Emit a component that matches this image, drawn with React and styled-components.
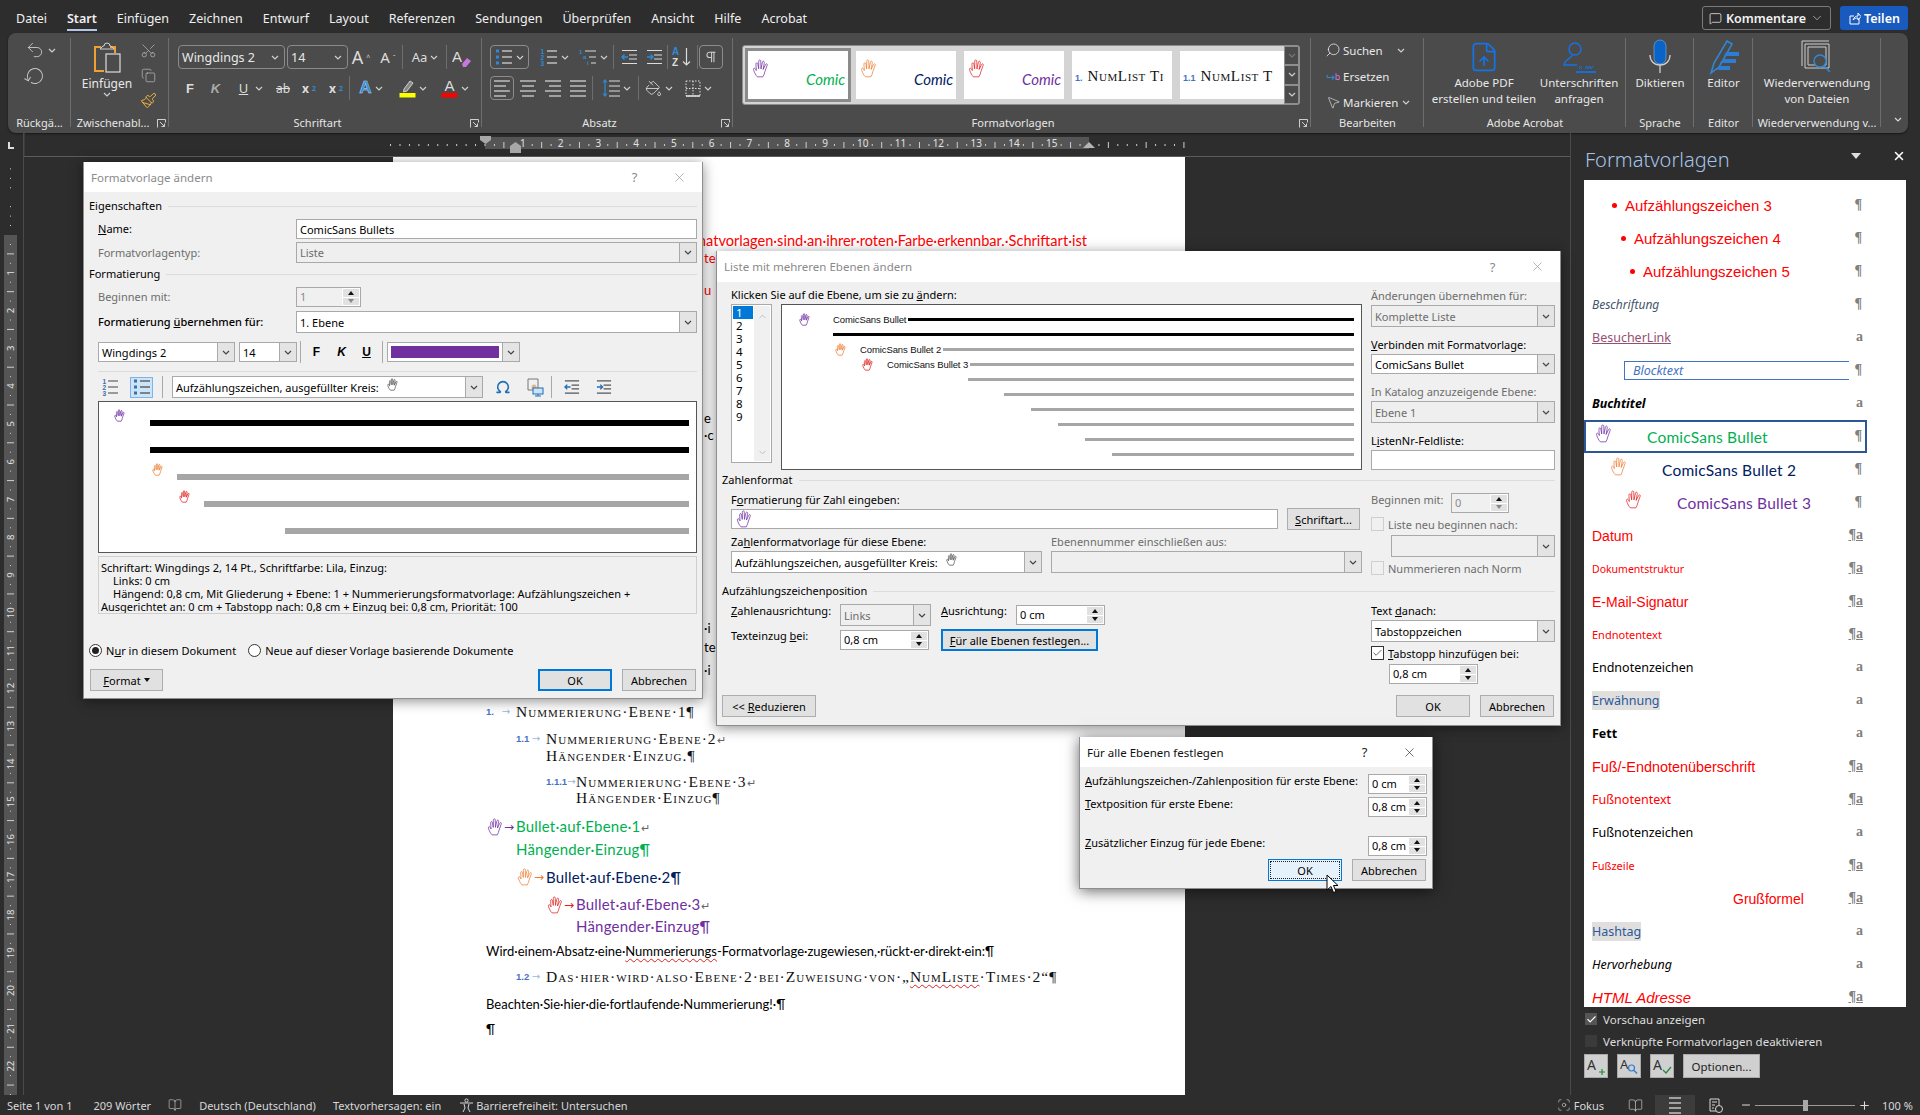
import React from "react";
import styled, { createGlobalStyle } from "styled-components";
import { Scissors, Copy, Paintbrush, Search, MousePointer2, RotateCw, Undo2, MessageSquare, FileUp, BookOpen, Focus, X, PaintBucket, Pilcrow, Omega, Plus, Minus, Check, ChevronDown } from "lucide-react";

const UI = '"Noto Sans", "Open Sans", sans-serif';
const ARIAL = '"Liberation Sans", Arial, sans-serif';
const SERIF = '"Liberation Serif", "Times New Roman", serif';
const BODY = 'Lato, "Noto Sans", sans-serif';

const Global = createGlobalStyle`
  html, body { margin: 0; padding: 0; background: #2d2d2d; }
  * { box-sizing: border-box; }
  body { font-family: ${UI}; }
  u { text-underline-offset: 1px; }
`;

const App_ = styled.div`
  position: relative; width: 1920px; height: 1115px; overflow: hidden;
  display: flex; flex-direction: column; background: #2d2d2d; font-family: ${UI};
`;

/* ---------- top bar ---------- */
const TopBar = styled.div`display: flex; height: 33px; align-items: flex-start; padding: 0 12px 0 16px; flex: none;`;
const Tabs = styled.div`display: flex; gap: 20px; flex: 1;`;
const Tab = styled.div`
  font-size: 12.5px; line-height: 18px; margin-top: 10px; padding-bottom: 1px; color: #f0f0f0;
  font-weight: ${p => (p.$on ? 600 : 400)};
  border-bottom: 2px solid ${p => (p.$on ? "#b4c7e7" : "transparent")};
`;
const Kommentare = styled.div`
  margin-top: 6px; width: 129px; height: 24px; border: 1px solid #7a7a7a; border-radius: 3px; color: #f2f2f2;
  display: flex; align-items: center; padding: 0 6px; gap: 4px; font-size: 12.5px; font-weight: 600; justify-content: space-between;
`;
const KomLabel = styled.div`display: flex; align-items: center; gap: 4px;`;
const Teilen = styled.div`
  margin: 6px 0 0 9px; width: 68px; height: 24px; background: #185abd; border-radius: 3px; color: #fff;
  display: flex; align-items: center; justify-content: center; gap: 3px; font-size: 12.5px; font-weight: 600;
`;

/* ---------- ribbon ---------- */
const Ribbon = styled.div`
  flex: none; height: 100px; margin: 0 12px 0 8px; background: #4b4b4b; border-radius: 8px;
  padding-top: 5px; display: flex; color: #dcdcdc; box-shadow: 0 1px 2px rgba(0,0,0,.5);
`;
const Group = styled.div`
  position: relative; width: ${p => p.$w}px; height: 95px; flex: none; display: flex; flex-direction: column;
  &::after { content: ""; position: absolute; right: 0; top: 0; height: 89px; width: 1px; background: ${p => (p.$nosep ? "transparent" : "#6e6e6e")}; }
`;
const GroupBody = styled.div`
  height: 78px; display: flex; flex-direction: ${p => p.$col ? "column" : "row"};
  padding: ${p => p.$pad || "0"}; gap: ${p => p.$gap || 0}px;
`;
const GroupLabel = styled.div`
  height: 14px; line-height: 14px; font-size: 11px; color: #e6e6e6; text-align: center; white-space: nowrap;
  padding-right: ${p => p.$pr || 0}px;
`;
const Launcher = styled.svg`position: absolute; right: 3px; bottom: 5px; width: 9px; height: 9px;`;
const ToolRow = styled.div`display: flex; height: 24px; align-items: center; margin-top: ${p => p.$mt || 0}px;`;
const Tool = styled.div`
  width: ${p => p.$w}px; height: ${p => p.$h || 24}px; flex: none; display: flex; align-items: center; justify-content: center; gap: 3px;
  color: #dcdcdc; font-size: ${p => p.$fs || 13}px; font-weight: ${p => p.$b ? 700 : 400}; font-style: ${p => p.$i ? "italic" : "normal"};
  margin-left: ${p => p.$ml || 0}px;
  ${p => p.$on ? "border: 1px solid #8c8c8c; border-radius: 4px;" : ""}
  ${p => p.$u ? "text-decoration: underline;" : ""}
  ${p => p.$s ? "text-decoration: line-through;" : ""}
`;
const Sep = styled.div`width: 1px; height: 24px; background: #6e6e6e; flex: none; margin: 0 ${p => p.$m ?? 1}px;`;
const Combo = styled.div`
  width: ${p => p.$w}px; height: 24px; flex: none; border: 1px solid #8a8a8a; border-radius: 4px; display: flex; align-items: center;
  justify-content: space-between; padding: 0 5px 0 3px; font-size: 12.5px; color: #e8e8e8; margin-right: ${p => p.$mr || 0}px;
`;
const PasteCol = styled.div`width: 65px; padding-left: 7px; display: flex; flex-direction: column; align-items: center;`;
const PasteIcon = styled.svg`width: 30px; height: 32px; margin-top: 3px;`;
const PasteText = styled.div`font-size: 12px; line-height: 16px; margin-top: 3px; color: #e8e8e8;`;
const SmallCol = styled.div`width: 24px; display: flex; flex-direction: column; align-items: center; padding-top: 2px; gap: 4px;`;
const SmallIcon = styled.div`height: 21px; display: flex; align-items: center; justify-content: center;`;

const Gallery = styled.div`margin: 7px 0 0 9px; width: 558px; height: 60px; display: flex; border: 1px solid #8e8e8e; border-radius: 3px; background: #d4d4d4;`;
const GalleryItems = styled.div`width: 542px; display: flex; gap: 8px; padding: 5px 0 0 5px; overflow: hidden;`;
const GalleryItem = styled.div`
  width: ${p => p.$w || 100}px; height: 48px; flex: none; background: #fff; display: flex; align-items: center; justify-content: space-between;
  padding: 0 3px; position: relative; white-space: nowrap;
  ${p => p.$sel ? "outline: 3px solid #8b8b8b;" : ""}
`;
const ComicWord = styled.span`font-family: ${BODY}; font-style: italic; font-size: 15px; color: ${p => p.$c}; padding-top: 8px;`;
const HandTop = styled.span`align-self: flex-start; padding-top: 8px; display: flex;`;
const NumWord = styled.span`font-family: ${SERIF}; font-variant: small-caps; font-size: 15px; color: #111; letter-spacing: .6px;`;
const NumLead = styled.span`font-size: 9px; font-weight: 700; color: #4472c4; margin-right: 5px; font-family: ${ARIAL};`;
const GalleryScroll = styled.div`width: 15px; display: flex; flex-direction: column; background: #4b4b4b;`;
const GScrollBtn = styled.div`height: 20px; border: 1px solid #8e8e8e; display: flex; align-items: center; justify-content: center;`;

const EditRow = styled.div`height: 26px; display: flex; align-items: center; font-size: 11.5px; margin-top: ${p => p.$mt || 0}px; color: #e8e8e8;`;
const EditIcon = styled.div`width: 20px; margin-right: 0; display: flex; justify-content: center; align-items: center; font-size: 9px; line-height: 9px;`;
const EditChev = styled.span`margin-left: ${p => p.$ml || 4}px; display: flex;`;
const Large = styled.div`width: ${p => p.$w}px; flex: none; display: flex; flex-direction: column; align-items: center;`;
const LargeIcon = styled.div`height: 37px; display: flex; align-items: center; justify-content: center;`;
const LargeText = styled.div`font-size: 11.5px; line-height: 16px; text-align: center; white-space: nowrap; color: #e8e8e8;`;
const RibbonEnd = styled.div`flex: 1; display: flex; justify-content: center; padding: 79px 0 0 6px;`;

/* ---------- workspace ---------- */
const Workspace = styled.div`flex: 1; display: flex; min-height: 0;`;
const VRuler = styled.svg`width: 24px; height: 962px; flex: none; border-right: 1px solid #4a4a4a;`;
const DocArea = styled.div`width: 1546px; flex: none; display: flex; flex-direction: column;`;
const HRuler = styled.svg`width: 1546px; height: 24px; flex: none; border-bottom: 1px solid #5c5c5c;`;
const Page = styled.div`
  margin-left: 369px; width: 792px; flex: 1; background: #fff; padding: 76px 0 0 93px; color: #000; overflow: hidden;
`;
const DocFrag = styled.div`
  font-family: ${BODY}; font-size: 13px; line-height: 16px; height: 16px; margin-top: ${p => p.$mt || 0}px; white-space: nowrap;
  margin-left: ${p => p.$ml || 0}px; color: ${p => p.$c || "#000"};
`;
const DocRed = styled.div`
  font-family: ${BODY}; font-size: 14.6px; line-height: 16px; height: 16px; color: #f00; white-space: nowrap;
  margin-left: -93px; width: 694px; text-align: right;
`;
const ListLine = styled.div`
  height: ${p => p.$h || 16}px; line-height: ${p => p.$h || 16}px; margin-top: ${p => p.$mt || 0}px; margin-left: ${p => p.$ml || 0}px;
  white-space: nowrap; display: flex; align-items: center;
`;
const NumMark = styled.span`width: 30px; flex: none; font-family: ${ARIAL}; font-size: 9.5px; font-weight: 700; color: #4472c4; white-space: pre;`;
const NumArrow = styled.span`color: #9ab6e0; font-size: 10px; font-family: "DejaVu Sans", sans-serif; font-weight: 400;`;
const Caps = styled.span`font-family: ${SERIF}; font-variant: small-caps; font-size: 15.5px; letter-spacing: 1px; color: #111;`;
const Comic = styled.span`font-family: ${BODY}; font-size: 15px; color: ${p => p.$c}; letter-spacing: .2px;`;
const HandSlot = styled.span`width: 30px; flex: none; display: flex; align-items: center; color: ${p => p.$c}; font-size: 12px; font-family: "DejaVu Sans", sans-serif;`;
const Wavy = styled.span`text-decoration: underline wavy #e02020 1px; text-underline-offset: 2px;`;
const Soft = styled.span`color: #666; font-size: 11px;`;

/* ---------- styles pane ---------- */
const Pane = styled.div`width: 350px; flex: none; border-left: 1px solid #4a4a4a; padding-left: 13px; display: flex; flex-direction: column;`;
const PaneHead = styled.div`height: 47px; display: flex; align-items: center; padding: 6px 10px 0 1px; color: #eee;`;
const PaneTitle = styled.div`flex: 1; font-size: 20px; font-weight: 300; color: #a6c3e8;`;
const PaneTri = styled.div`width: 0; height: 0; border: 5px solid transparent; border-top: 6px solid #ddd; border-bottom: 0; margin-right: 31px; margin-top: -8px;`;
const PaneClose = styled.div`margin-top: -8px; margin-right: 4px; display: flex; color: #fff;`;
const StyleList = styled.div`width: 322px; height: 827px; background: #fff; padding-top: 9px; overflow: hidden; flex: none;`;
const StyleRow = styled.div`
  width: 283px; height: 33px; display: flex; align-items: center; position: relative; padding-left: ${p => p.$pl}px; flex: none; white-space: nowrap;
  ${p => p.$sel ? "outline: 2px solid #2b5797; outline-offset: -2px;" : ""}
`;
const StyleName = styled.span`
  font-family: ${p => p.$f === "a" ? ARIAL : p.$f === "c" ? BODY : UI}; font-size: ${p => p.$s}px; color: ${p => p.$c};
  font-style: ${p => p.$i ? "italic" : "normal"}; font-weight: ${p => p.$b ? 700 : 400};
  text-decoration: ${p => p.$u ? "underline" : "none"}; background: ${p => p.$bg || "transparent"};
  letter-spacing: ${p => p.$ls || 0}px; padding: ${p => p.$bg ? "1px 0" : 0};
`;
const Dot = styled.span`width: 5px; height: 5px; border-radius: 50%; background: #f00; margin-right: 8px; flex: none;`;
const BlockBox = styled.div`
  width: 225px; height: 19px; border: 1px solid #4472c4; border-right: 0; margin-left: 32px; padding-left: 8px; display: flex; align-items: center;
`;
const HandGap = styled.span`width: ${p => p.$w}px; flex: none; display: flex; align-items: center;`;
const Marker = styled.span`
  position: absolute; right: ${p => p.$r}px; top: 8px; font-family: ${SERIF}; font-size: 14px; font-weight: 700; color: #808080; line-height: 15px;
  text-decoration: ${p => p.$u ? "underline" : "none"};
`;
const PaneCheck = styled.div`height: 22px; display: flex; align-items: center; gap: 6px; font-size: 11.5px; color: #dedede; padding-left: 1px; position: relative; top: 1px;`;
const PaneBox = styled.div`width: 12px; height: 12px; background: ${p => p.$on ? "#555" : "#3a3a3a"}; display: flex; align-items: center; justify-content: center; color: #fff;`;
const PaneBtns = styled.div`display: flex; gap: 9px; margin-top: 3px;`;
const PaneBtn = styled.div`width: ${p => p.$w || 24}px; height: 24px; background: #d0d0d0; border: 1px solid #aaa; display: flex; align-items: center; justify-content: center; font-size: 11.5px; color: #222;`;

/* ---------- status bar ---------- */
const Status = styled.div`flex: none; height: 20px; display: flex; align-items: center; font-size: 11px; color: #d8d8d8; padding-left: 7px; white-space: nowrap;`;
const StatusItem = styled.div`margin-left: ${p => p.$ml || 0}px; display: flex; align-items: center; gap: ${p => p.$gap ?? 3}px; width: ${p => p.$w ? p.$w + "px" : "auto"};`;
const StatusRight = styled.div`margin-left: auto; display: flex; align-items: center; height: 20px;`;
const ViewBtn = styled.div`width: 40px; height: 20px; display: flex; align-items: center; justify-content: center; background: ${p => p.$on ? "#3c3c3c" : "transparent"}; margin-left: ${p => p.$ml || 0}px;`;
const ZoomMinus = styled.span`display: flex; margin-left: 5px;`;
const Slider = styled.div`width: 100px; height: 1px; background: #9a9a9a; margin: 0 3px; position: relative;`;
const Thumb = styled.div`position: absolute; left: 48px; top: -5px; width: 5px; height: 11px; background: #a8a8a8;`;

/* ---------- dialog chrome ---------- */
const Dialog = styled.div`
  position: absolute; left: ${p => p.$x}px; top: ${p => p.$y}px; width: ${p => p.$w}px; height: ${p => p.$h}px;
  background: #f0f0f0; box-shadow: 0 2px ${p => p.$strong ? "14px rgba(0,0,0,.6)" : "12px rgba(0,0,0,.45)"}; border: 1px solid #8e8e8e; border-top-width: 0;
  font-family: ${UI}; font-size: 11px; color: #000; display: flex; flex-direction: column;
`;
const TitleBar = styled.div`height: ${p => p.$h || 30}px; flex: none; background: #fff; display: flex; align-items: center; padding-left: ${p => p.$pl || 7}px;`;
const TitleText = styled.div`flex: 1; font-size: 11.5px; color: ${p => p.$on ? "#111" : "#8a8a8a"};`;
const TitleHelp = styled.div`width: 45px; text-align: center; font-size: 13px; color: ${p => p.$on ? "#222" : "#8a8a8a"};`;
const TitleClose = styled.div`width: 45px; display: flex; justify-content: center; color: ${p => p.$on ? "#222" : "#8a8a8a"};`;
const Body = styled.div`flex: 1; padding: 0 5px; display: flex; flex-direction: column;`;
const SectionHead = styled.div`
  height: 16px; display: flex; align-items: center; gap: 6px; margin-top: ${p => p.$mt || 0}px; line-height: 16px; white-space: nowrap;
  &::after { content: ""; flex: 1; height: 1px; background: #dcdcdc; }
`;
const FormRow = styled.div`
  height: ${p => p.$h}px; margin-top: ${p => p.$mt || 0}px; padding-left: ${p => p.$pl ?? 9}px; display: flex; flex: none;
  align-items: ${p => p.$top ? "flex-start" : "center"}; justify-content: ${p => p.$between ? "space-between" : "flex-start"};
  gap: ${p => p.$gap || 0}px;
`;
const Label = styled.div`
  width: ${p => p.$w ? p.$w + "px" : "auto"}; flex: none; height: 14px; line-height: 14px; white-space: nowrap; color: ${p => p.$dis ? "#6d6d6d" : "#000"};
  margin-top: ${p => p.$mt || 0}px; margin-left: ${p => p.$ml || 0}px; font-weight: ${p => p.$b ? 500 : 400};
  align-self: ${p => p.$top ? "flex-start" : "auto"};
`;
const TextField = styled.div`
  width: ${p => p.$w}px; height: ${p => p.$h || 20}px; flex: none; background: #fff; border: 1px solid #a9a9a9; padding: 0 3px; margin-top: ${p => p.$mt || 0}px;
  display: flex; align-items: center; white-space: nowrap;
`;
const SelectBox = styled.div`
  width: ${p => p.$w}px; height: ${p => p.$h || 22}px; flex: none; display: flex; border: 1px solid #a9a9a9;
  background: ${p => p.$dis ? "#efefef" : "#fff"}; color: ${p => p.$dis ? "#6d6d6d" : "#000"};
  margin-top: ${p => p.$mt || 0}px; margin-left: ${p => p.$ml || 0}px;
`;
const SelectText = styled.div`flex: 1; min-width: 0; padding-left: 3px; display: flex; align-items: center; gap: 7px; white-space: nowrap; overflow: hidden;`;
const SelectArrow = styled.div`width: 17px; flex: none; background: #e4e4e4; border-left: 1px solid #a9a9a9; display: flex; align-items: center; justify-content: center; color: #444;`;
const SpinBox = styled.div`
  width: ${p => p.$w}px; height: 20px; flex: none; display: flex; border: 1px solid #a9a9a9; background: #fff;
  margin-top: ${p => p.$mt || 0}px; margin-left: ${p => p.$ml || 0}px;
`;
const SpinValue = styled.div`flex: 1; padding-left: 3px; line-height: 18px; white-space: nowrap; color: ${p => p.$dis ? "#8a8a8a" : "#000"}; background: ${p => p.$dis ? "#f0f0f0" : "#fff"};`;
const SpinBtns = styled.div`width: 16px; flex: none; display: flex; flex-direction: column; margin: 1px; gap: 1px;`;
const SpinBtn = styled.div`flex: 1; background: #e1e1e1; display: flex; align-items: center; justify-content: center;`;
const Tri = styled.div`
  width: 0; height: 0; border-left: 3.5px solid transparent; border-right: 3.5px solid transparent;
  ${p => p.$down ? `border-top: 4px solid ${p.$dis ? "#888" : "#111"};` : `border-bottom: 4px solid ${p.$dis ? "#888" : "#111"};`}
`;
const Btn = styled.div`
  width: ${p => p.$w}px; height: 22px; flex: none; display: flex; align-items: center; justify-content: center; white-space: nowrap; position: relative; gap: 3px;
  margin-left: ${p => p.$ml || 0}px;
  background: ${p => p.$focus ? "#e5f1fb" : "#e1e1e1"};
  border: ${p => p.$def ? "2px solid #0078d7" : p.$focus ? "1px solid #0078d7" : "1px solid #adadad"};
  ${p => p.$focus ? "outline: 1px dotted #222; outline-offset: -3px;" : ""}
`;
const DlgHr = styled.div`height: 1px; background: #dcdcdc; margin-top: ${p => p.$mt || 0}px; margin-left: ${p => p.$ml || 0}px; flex: none;`;

/* dialog 1 */
const RoundBtn = styled.div`width: 25px; text-align: center; font-family: ${ARIAL}; font-size: 12px; font-weight: 700; font-style: ${p => p.$i ? "italic" : "normal"}; text-decoration: ${p => p.$u ? "underline" : "none"};`;
const DlgSep = styled.div`width: 1px; height: 22px; background: #a9a9a9; flex: none; margin: 0 ${p => p.$m || 3}px;`;
const Swatch = styled.div`flex: 1; margin: 3px; background: ${p => p.$c};`;
const IconToggle = styled.div`
  width: ${p => p.$w || 24}px; height: 21px; flex: none; display: flex; align-items: center; justify-content: center;
  ${p => p.$on ? "background: #cce4f7; border: 1px solid #7eb4ea;" : ""}
  margin-left: ${p => p.$ml || 0}px;
`;
const Preview = styled.div`
  height: ${p => p.$h}px; margin: ${p => p.$mt || 0}px 0 0 ${p => p.$ml ?? 9}px; width: ${p => p.$w}px; flex: none; background: #fff; border: 1px solid #555;
  padding: ${p => p.$pad || "0"}; overflow: hidden;
`;
const PreviewHand = styled.div`height: 11px; padding-left: ${p => p.$pl}px; margin-top: ${p => p.$mt || 0}px; display: flex; align-items: flex-start;`;
const PreviewBar = styled.div`height: ${p => p.$h || 6}px; background: ${p => p.$c || "#a6a6a6"}; margin: ${p => p.$mt || 0}px 7px 0 ${p => p.$ml}px;`;
const Desc = styled.div`
  height: 58px; margin: 3px 0 0 9px; border: 1px solid #e8e8e8; outline: 1px solid #cfcfcf; outline-offset: -1px; font-size: 11px; line-height: 13px; padding: 4px 2px; white-space: nowrap; flex: none;
`;
const DescLine = styled.div`padding-left: ${p => p.$pl || 0}px;`;
const RadioRow = styled.div`height: 16px; margin-top: 28px; display: flex; align-items: center; flex: none;`;
const Radio = styled.div`
  width: 13px; height: 13px; border-radius: 50%; border: 1px solid #333; background: #fff; flex: none; display: flex; align-items: center; justify-content: center;
  margin-left: ${p => p.$ml || 0}px; margin-right: 4px;
  &::after { content: ""; width: 7px; height: 7px; border-radius: 50%; background: ${p => p.$on ? "#222" : "transparent"}; }
`;
const RadioText = styled.span`white-space: nowrap;`;
const FooterRow = styled.div`display: flex; justify-content: ${p => p.$end ? "flex-end" : "space-between"}; margin-top: ${p => p.$mt || 0}px; padding-right: ${p => p.$pr || 0}px; padding-left: ${p => p.$pl || 0}px; flex: none;`;
const BtnPair = styled.div`display: flex; gap: 10px;`;

/* dialog 2 */
const Split = styled.div`display: flex; height: ${p => p.$h}px; flex: none; margin-top: ${p => p.$mt || 0}px;`;
const LeftCol = styled.div`width: 649px; flex: none; padding-left: 9px;`;
const RightCol = styled.div`width: 184px; flex: none;`;
const PreRow = styled.div`display: flex; gap: 9px; margin-top: 2px;`;
const LevelList = styled.div`width: 41px; height: 159px; border: 1px solid #a9a9a9; background: #fff; display: flex; padding: 1px;`;
const LevelItems = styled.div`width: 20px; flex: none;`;
const LevelItem = styled.div`height: 13px; line-height: 13px; font-size: 11.5px; padding-left: 3px; background: ${p => p.$on ? "#0078d7" : "transparent"}; color: ${p => p.$on ? "#fff" : "#000"};`;
const LevelScroll = styled.div`flex: 1; margin-left: 1px; background: #f0f0f0; display: flex; flex-direction: column; justify-content: space-between; align-items: center; padding: 5px 0 3px; color: #bbb;`;
const PRow = styled.div`height: 15px; display: flex; align-items: center; padding-left: ${p => p.$pl}px; padding-right: 7px;`;
const PLabel = styled.span`font-family: ${ARIAL}; font-size: 9.5px; white-space: nowrap; margin-right: 2px; color: #111; letter-spacing: -.1px;`;
const PBar = styled.div`flex: 1; height: 3px; background: ${p => p.$c || "#a6a6a6"};`;
const PHand = styled.span`width: ${p => p.$w}px; flex: none; display: flex;`;
const TwoSel = styled.div`display: flex; gap: 9px; margin-top: 2px;`;
const LabelPair = styled.div`display: flex; margin-top: 5px;`;
const CheckRow = styled.div`display: flex; align-items: center; gap: 4px; height: 14px; margin-top: ${p => p.$mt || 0}px; white-space: nowrap; color: ${p => p.$dis ? "#6d6d6d" : "#000"};`;
const CheckBox = styled.div`width: 13px; height: 14px; flex: none; background: ${p => p.$dis ? "#f0f0f0" : "#fff"}; border: 1px solid ${p => p.$dis ? "#cfcfcf" : "#333"}; display: flex; align-items: center; justify-content: center;`;

/* cursor */
const CursorSvg = styled.svg`position: absolute; left: 1326px; top: 874px; width: 13px; height: 20px;`;

/* ---------- small drawings ---------- */
const Hand = ({ size = 14, color, style }) => {
  const px = Math.round(size * 1.25);
  return (
    <svg width={px} height={px} viewBox="0 0 24 24" fill="none" stroke={color} strokeWidth={(24 / px) * 0.75} strokeLinejoin="round" style={{ flex: "none", ...style }}>
      <path d="M8 22.500c-2-2-3.200-4.500-4.500-8-.6-1.600-.3-2.700.6-2.900.9-.2 1.700.9 2.600 3L6.300 8c-.2-2 .1-3.100 1-3.200 1-.1 1.400 1 1.600 3l.8 4.700.1-9c0-1.500.4-2.400 1.300-2.400s1.300.9 1.300 2.400l.2 9 1.700-7.800c.3-1.400.8-2.100 1.600-1.900.8.2 1.100 1.200.8 2.600l-1.400 7.900 2.800-5.800c.6-1.200 1.200-1.700 1.900-1.300.7.400.7 1.400.1 2.600L17.500 16c-.6 2.400-1.200 4.600-2.500 6.500z" />
    </svg>
  );
};
const Chev = ({ c = "#cfcfcf", w = 8 }) => (
  <svg width={w} height="5" viewBox="0 0 8 5" fill="none"><path d="M1 1l3 3 3-3" stroke={c} strokeWidth="1.2" /></svg>
);
const Lines = ({ w = 18, n = 3, lead = 0, c = "#dcdcdc", align = "left" }) => {
  const ys = n === 4 ? [3, 8, 13, 18] : [4, 10, 16];
  return (
    <svg width={w} height="20" viewBox={`0 0 ${w} 20`}>
      {ys.map((y, i) => {
        const short = align !== "just" && i % 2 === 1 ? 4 : 0;
        const x1 = align === "right" ? lead + short : align === "center" ? lead + short / 2 : lead;
        const x2 = align === "right" ? w : align === "center" ? w - short / 2 : w - short;
        return <line key={y} x1={x1} x2={x2} y1={y} y2={y} stroke={c} strokeWidth="1.2" />;
      })}
    </svg>
  );
};
const BulletIcon = ({ c = "#dcdcdc", b = "#2e8ad8" }) => (
  <svg width="18" height="18" viewBox="0 0 18 18">
    {[3, 9, 15].map(y => <g key={y}><rect x="1" y={y - 1.5} width="3" height="3" fill={b} /><line x1="7" x2="17" y1={y} y2={y} stroke={c} strokeWidth="1.2" /></g>)}
  </svg>
);
const NumIcon = ({ c = "#dcdcdc", b = "#2e8ad8" }) => (
  <svg width="18" height="18" viewBox="0 0 18 18">
    {[3, 9, 15].map((y, i) => <g key={y}><text x="0.5" y={y + 2.5} fontSize="6.5" fontWeight="700" fill={b} fontFamily="Liberation Sans">{i + 1}</text><line x1="7" x2="17" y1={y} y2={y} stroke={c} strokeWidth="1.2" /></g>)}
  </svg>
);
const MultiIcon = () => (
  <svg width="18" height="18" viewBox="0 0 18 18">
    <text x="0" y="6" fontSize="6" fill="#2e8ad8" fontWeight="700" fontFamily="Liberation Sans">1</text>
    <text x="4" y="11" fontSize="6" fill="#2e8ad8" fontWeight="700" fontFamily="Liberation Sans">a</text>
    <text x="8" y="17" fontSize="6" fill="#2e8ad8" fontWeight="700" fontFamily="Liberation Sans">i</text>
    <path d="M6 3h11M10 9h7M12 15h5" stroke="#dcdcdc" strokeWidth="1.2" />
  </svg>
);
const IndentIcon = ({ out, c = "#dcdcdc", b = "#2e8ad8" }) => (
  <svg width="17" height="16" viewBox="0 0 17 16" fill="none">
    <path d="M1 1.5h15M8 6h8M8 10h8M1 14.5h15" stroke={c} strokeWidth="1.2" />
    <path d={out ? "M7 8H1M3.5 5.5L1 8l2.5 2.5" : "M1 8h6M4.5 5.5L7 8l-2.5 2.5"} stroke={b} strokeWidth="1.4" />
  </svg>
);
const SortIcon = () => (
  <svg width="20" height="22" viewBox="0 0 20 22">
    <text x="0" y="9" fontSize="10" fontWeight="700" fill="#2e8ad8" fontFamily="Liberation Sans">A</text>
    <text x="0" y="20" fontSize="10" fontWeight="700" fill="#dcdcdc" fontFamily="Liberation Sans">Z</text>
    <path d="M14.5 2v17M11 15.5l3.5 3.5 3.5-3.5" stroke="#dcdcdc" strokeWidth="1.2" fill="none" />
  </svg>
);
const LineSpacing = () => (
  <svg width="18" height="20" viewBox="0 0 18 20" fill="none">
    <path d="M7 3h11M7 8h11M7 13h11M7 18h11" stroke="#dcdcdc" strokeWidth="1.2" />
    <path d="M3 2v16M1 4.5L3 2l2 2.5M1 15.5L3 18l2-2.5" stroke="#2e8ad8" strokeWidth="1.2" />
  </svg>
);
const BorderIcon = () => (
  <svg width="16" height="17" viewBox="0 0 16 17" fill="none">
    <path d="M1 1h14v15H1zM8 1v15M1 8.5h14" stroke="#dcdcdc" strokeWidth="1" strokeDasharray="1.5 1.5" />
    <path d="M1 16h14" stroke="#eee" strokeWidth="1.4" />
  </svg>
);
const LetterBar = ({ c, children, letter = "#dcdcdc" }) => (
  <svg width="17" height="20" viewBox="0 0 17 20">
    <text x="8.5" y="13" textAnchor="middle" fontSize="15" fill={letter} fontFamily="Liberation Sans">{children}</text>
    <rect x="0.5" y="15" width="16" height="4.5" fill={c} />
  </svg>
);
const HighlightIcon = () => (
  <svg width="17" height="20" viewBox="0 0 17 20" fill="none">
    <path d="M5 11l6-8 3 2-6 8-3.5 1z" stroke="#cfcfcf" strokeWidth="1" fill="#8a8a8a" />
    <rect x="0.5" y="15" width="16" height="4.5" fill="#ffff00" />
  </svg>
);
const Launch = () => (
  <Launcher viewBox="0 0 9 9" fill="none"><path d="M.5 8.5V.5h3M.5.5h8v3M3 3l4.5 4.5M7.5 4.5v3h-3" stroke="#cfcfcf" strokeWidth="1" /></Launcher>
);
const NumberListIcon = () => (
  <svg width="16" height="18" viewBox="0 0 16 18">
    {[3, 9, 15].map((y, i) => <g key={y}><text x="0.5" y={y + 2.5} fontSize="6.5" fontWeight="700" fill="#3d6ea5" fontFamily="Liberation Sans">{i + 1}</text><line x1="6" x2="16" y1={y} y2={y} stroke="#444" strokeWidth="1" /></g>)}
  </svg>
);
const SymbolChev = () => <Chev c="#444" />;

const Select = ({ w, h, dis, mt, ml, children }) => (
  <SelectBox $w={w} $h={h} $dis={dis} $mt={mt} $ml={ml}>
    <SelectText>{children}</SelectText>
    <SelectArrow><SymbolChev /></SelectArrow>
  </SelectBox>
);
const Spin = ({ w, v, dis, mt, ml }) => (
  <SpinBox $w={w} $mt={mt} $ml={ml}>
    <SpinValue $dis={dis}>{v}</SpinValue>
    <SpinBtns>
      <SpinBtn><Tri /></SpinBtn>
      <SpinBtn><Tri $down $dis={dis} /></SpinBtn>
    </SpinBtns>
  </SpinBox>
);
const Title = ({ on, children, h, pl }) => (
  <TitleBar $h={h} $pl={pl}>
    <TitleText $on={on}>{children}</TitleText>
    <TitleHelp $on={on}>?</TitleHelp>
    <TitleClose $on={on}><X size={15} strokeWidth={1} /></TitleClose>
  </TitleBar>
);
const Check_ = ({ on, dis, mt, children }) => (
  <CheckRow $dis={dis} $mt={mt}>
    <CheckBox $dis={dis}>{on && <Check size={12} strokeWidth={1.4} color="#111" />}</CheckBox>
    <span>{children}</span>
  </CheckRow>
);

/* ---------- data ---------- */
const TABS = ["Datei", "Start", "Einfügen", "Zeichnen", "Entwurf", "Layout", "Referenzen", "Sendungen", "Überprüfen", "Ansicht", "Hilfe", "Acrobat"];

const rulerNums = Array.from({ length: 15 }, (_, i) => i + 1);
const HRulerDraw = () => {
  const z = 461, cm = 37.78; // x of ruler zero in this svg
  const ticks = [];
  for (let i = -10; i <= 80; i++) {
    const x = z + i * cm / 4;
    if (x < 366 || x > 1162) continue;
    if (i % 4 === 0 && i > 0 && i < 64) continue;
    ticks.push(<line key={i} x1={x} x2={x} y1={i % 4 === 2 ? 9 : 11} y2={i % 4 === 2 ? 15 : 13} stroke="#cfcfcf" strokeWidth="1" />);
  }
  return (
    <HRuler viewBox="0 0 1546 23">
      <path d="M0.5 0v24" stroke="#3a3a3a" />
      <rect x={z} y="4" width={1065 - z} height="12" fill="#555" />
      {ticks}
      {rulerNums.map(n => <text key={n} x={z + n * cm} y="14" textAnchor="middle" fontSize="10" fill="#e2e2e2" fontFamily="Noto Sans">{n}</text>)}
      <path d={`M${z - 5} 3h11v4l-5.5 4-5.5-4z`} fill="#a8a8a8" />
      <path d={`M${z + 25} 20v-7l5.5-4 5.5 4v7z`} fill="#a8a8a8" />
      <path d={`M1059 15l6-6 6 6z`} fill="#b5b5b5" />
    </HRuler>
  );
};
const VRulerDraw = () => {
  const top = 102, cm = 37.78;
  const nums = Array.from({ length: 22 }, (_, i) => i + 1);
  const ticks = [];
  for (let i = -10; i < 92; i++) {
    const y = top + i * cm / 4;
    if (y < 24 || i % 4 === 0) continue;
    ticks.push(<line key={i} x1={i % 4 === 2 ? 7 : 10} x2={i % 4 === 2 ? 14 : 11} y1={y} y2={y} stroke="#cfcfcf" />);
  }
  return (
    <VRuler viewBox="0 0 23 962">
      <path d="M9 9v6h5" stroke="#ddd" strokeWidth="2" fill="none" />
      <rect x="4" y={top} width="13" height="860" fill="#555" />
      {ticks}
      {nums.map(n => (
        <text key={n} transform={`translate(14 ${top + n * cm}) rotate(-90)`} textAnchor="middle" fontSize="9.5" fill="#e2e2e2" fontFamily="Noto Sans">{n}</text>
      ))}
    </VRuler>
  );
};

const STYLES = [
  { name: "Aufzählungszeichen 3", f: "a", s: 15, c: "#f00", pl: 28, dot: 1, m: "p" },
  { name: "Aufzählungszeichen 4", f: "a", s: 15, c: "#f00", pl: 37, dot: 1, m: "p" },
  { name: "Aufzählungszeichen 5", f: "a", s: 15, c: "#f00", pl: 46, dot: 1, m: "p" },
  { name: "Beschriftung", f: "n", s: 12, c: "#44546a", i: 1, pl: 8, m: "p" },
  { name: "BesucherLink", f: "n", s: 12.5, c: "#954f72", u: 1, pl: 8, m: "a" },
  { name: "Blocktext", box: 1, f: "n", s: 12.5, c: "#4472c4", i: 1, pl: 8, m: "p" },
  { name: "Buchtitel", f: "n", s: 12.5, c: "#000", i: 1, b: 1, pl: 8, m: "a" },
  { name: "ComicSans Bullet", f: "c", s: 15.5, c: "#00b050", pl: 10, hand: "#7030a0", gap: 53, ls: 0.2, sel: 1, m: "p" },
  { name: "ComicSans Bullet 2", f: "c", s: 15.5, c: "#002060", pl: 25, hand: "#ed7d31", gap: 53, ls: 0.2, m: "p" },
  { name: "ComicSans Bullet 3", f: "c", s: 15.5, c: "#7030a0", pl: 40, hand: "#e02020", gap: 53, ls: 0.2, m: "p" },
  { name: "Datum", f: "a", s: 14, c: "#f00", pl: 8, m: "u" },
  { name: "Dokumentstruktur", f: "n", s: 10.5, c: "#f00", pl: 8, m: "u" },
  { name: "E-Mail-Signatur", f: "a", s: 14, c: "#f00", pl: 8, m: "u" },
  { name: "Endnotentext", f: "n", s: 11, c: "#f00", pl: 8, m: "u" },
  { name: "Endnotenzeichen", f: "n", s: 12.5, c: "#000", pl: 8, m: "a" },
  { name: "Erwähnung", f: "n", s: 12.5, c: "#2b579a", bg: "#e1dfdd", pl: 8, m: "a" },
  { name: "Fett", f: "n", s: 12.5, c: "#000", b: 1, pl: 8, m: "a" },
  { name: "Fuß/-Endnotenüberschrift", f: "a", s: 14.4, c: "#f00", pl: 8, m: "u" },
  { name: "Fußnotentext", f: "n", s: 12.5, c: "#f00", pl: 8, m: "u" },
  { name: "Fußnotenzeichen", f: "n", s: 12.5, c: "#000", pl: 8, m: "a" },
  { name: "Fußzeile", f: "n", s: 11, c: "#f00", pl: 8, m: "u" },
  { name: "Grußformel", f: "a", s: 14, c: "#f00", pl: 149, m: "u" },
  { name: "Hashtag", f: "n", s: 12.5, c: "#2b579a", bg: "#e1dfdd", pl: 8, m: "a" },
  { name: "Hervorhebung", f: "n", s: 12.5, c: "#000", i: 1, pl: 8, m: "a" },
  { name: "HTML Adresse", f: "a", s: 15, c: "#f00", i: 1, pl: 8, m: "u" },
];

const GROUPS_LEVELS = [1, 2, 3, 4, 5, 6, 7, 8, 9];

export default function App() {
  return (
    <App_>
      <Global />
      <TopBar>
        <Tabs>{TABS.map(t => <Tab key={t} $on={t === "Start"}>{t}</Tab>)}</Tabs>
        <Kommentare>
          <KomLabel><MessageSquare size={13} strokeWidth={1.4} />Kommentare</KomLabel>
          <ChevronDown size={14} strokeWidth={1} />
        </Kommentare>
        <Teilen>
          <svg width="13" height="14" viewBox="0 0 13 14" fill="none"><path d="M6 5H2v8h9V8M5 9c1-3 3-4 5-4V2l3 3.5L10 9V7c-2 0-3.5.5-5 2z" stroke="#fff" strokeWidth="1" /></svg>
          Teilen
        </Teilen>
      </TopBar>

      <Ribbon>
        <Group $w={63}>
          <GroupBody $col $pad="0 0 0 15px">
            <ToolRow>
              <Tool $w={24}><Undo2 size={20} strokeWidth={1.1} color="#c8c8c8" /></Tool>
              <Tool $w={8} $ml={1}><Chev /></Tool>
            </ToolRow>
            <ToolRow $mt={2}>
              <Tool $w={24}><RotateCw size={20} strokeWidth={1.1} color="#c8c8c8" style={{ transform: "scaleX(-1) rotate(60deg)" }} /></Tool>
            </ToolRow>
          </GroupBody>
          <GroupLabel>Rückgä...</GroupLabel>
        </Group>

        <Group $w={98}>
          <GroupBody>
            <PasteCol>
              <PasteIcon viewBox="0 0 30 32" fill="none">
                <path d="M9 6H3v24h9" stroke="#f0a030" strokeWidth="2" />
                <path d="M18 6h5v6" stroke="#f0a030" strokeWidth="2" />
                <path d="M8 8l3-3h1a3 3 0 0 1 6 0h1l3 3z" stroke="#cfcfcf" strokeWidth="1" />
                <rect x="14" y="13" width="14" height="18" fill="#4b4b4b" stroke="#dcdcdc" strokeWidth="1.2" />
              </PasteIcon>
              <PasteText>Einfügen</PasteText>
              <Chev />
            </PasteCol>
            <SmallCol>
              <SmallIcon><Scissors size={17} strokeWidth={1} color="#bbb" style={{ transform: "rotate(-90deg)" }} /></SmallIcon>
              <SmallIcon><Copy size={15} strokeWidth={1} color="#ccc" /></SmallIcon>
              <SmallIcon><Paintbrush size={17} strokeWidth={1.4} color="#f0b040" /></SmallIcon>
            </SmallCol>
          </GroupBody>
          <GroupLabel $pr={14}>Zwischenabl...</GroupLabel>
          <Launch />
        </Group>

        <Group $w={313}>
          <GroupBody $col $pad="7px 0 0 9px" $gap={7}>
            <ToolRow>
              <Combo $w={107} $mr={2}>Wingdings 2<Chev /></Combo>
              <Combo $w={61}>14<Chev /></Combo>
              <Tool $w={26} $fs={18}>A<sup style={{ fontSize: 7 }}>^</sup></Tool>
              <Tool $w={26} $fs={15} $ml={1}>A<sup style={{ fontSize: 7 }}>ˇ</sup></Tool>
              <Sep />
              <Tool $w={42}><span>Aa</span><Chev /></Tool>
              <Sep $m={0} />
              <Tool $w={30}>
                <svg width="20" height="20" viewBox="0 0 20 20"><text x="0" y="15" fontSize="15" fill="#dcdcdc" fontFamily="Liberation Sans">A</text><path d="M10 17l5-6 4 3-5 6h-3z" fill="#c678dd" /></svg>
              </Tool>
            </ToolRow>
            <ToolRow>
              <Tool $w={24} $b $fs={13} style={{ fontFamily: ARIAL }}>F</Tool>
              <Tool $w={25} $i $fs={13} $ml={1} style={{ fontFamily: ARIAL, fontWeight: 700, color: "#aaa" }}>K</Tool>
              <Tool $w={42}><Tool as="span" $w={16} $u $fs={13}>U</Tool><Chev /></Tool>
              <Tool $w={24} $ml={1} $s $fs={12}>ab</Tool>
              <Tool $w={24} $ml={2} $b $fs={12}>x<sub style={{ fontSize: 7, color: "#2e8ad8" }}>2</sub></Tool>
              <Tool $w={24} $ml={3} $b $fs={12}>x<sup style={{ fontSize: 7, color: "#2e8ad8" }}>2</sup></Tool>
              <Sep />
              <Tool $w={40}><span style={{ color: "#2e8ad8", fontWeight: 700, fontSize: 17, fontFamily: ARIAL, WebkitTextStroke: ".5px #bcdcf7" }}>A</span><Chev /></Tool>
              <Tool $w={43}><HighlightIcon /><Chev /></Tool>
              <Tool $w={41}><LetterBar c="#ff0000">A</LetterBar><Chev /></Tool>
            </ToolRow>
          </GroupBody>
          <GroupLabel $pr={16}>Schriftart</GroupLabel>
          <Launch />
        </Group>

        <Group $w={251}>
          <GroupBody $col $pad="7px 0 0 8px" $gap={7}>
            <ToolRow>
              <Tool $w={39} $on><BulletIcon /><Chev /></Tool>
              <Tool $w={42} $ml={4}><NumIcon /><Chev /></Tool>
              <Tool $w={36}><MultiIcon /><Chev /></Tool>
              <Sep $m={2} />
              <Tool $w={26}><IndentIcon out /></Tool>
              <Tool $w={25}><IndentIcon /></Tool>
              <Sep $m={0} />
              <Tool $w={28}><SortIcon /></Tool>
              <Sep $m={1} />
              <Tool $w={24} $on><Pilcrow size={14} strokeWidth={1.8} color="#cfcfcf" /></Tool>
            </ToolRow>
            <ToolRow>
              <Tool $w={24} $on><Lines w={16} n={4} /></Tool>
              <Tool $w={25} $ml={1}><Lines w={16} n={4} align="center" /></Tool>
              <Tool $w={25}><Lines w={16} n={4} align="right" /></Tool>
              <Tool $w={25}><Lines w={16} n={4} align="just" /></Tool>
              <Sep $m={2} />
              <Tool $w={42}><LineSpacing /><Chev /></Tool>
              <Sep $m={1} />
              <Tool $w={38}><PaintBucket size={17} strokeWidth={1.2} color="#dcdcdc" /><Chev /></Tool>
              <Tool $w={40}><BorderIcon /><Chev /></Tool>
            </ToolRow>
          </GroupBody>
          <GroupLabel $pr={16}>Absatz</GroupLabel>
          <Launch />
        </Group>

        <Group $w={578}>
          <GroupBody>
            <Gallery>
              <GalleryItems>
                <GalleryItem $sel><HandTop><Hand size={15} color="#7030a0" /></HandTop><ComicWord $c="#00b050">Comic</ComicWord></GalleryItem>
                <GalleryItem><HandTop><Hand size={15} color="#ed7d31" /></HandTop><ComicWord $c="#002060">Comic</ComicWord></GalleryItem>
                <GalleryItem><HandTop><Hand size={15} color="#e02020" /></HandTop><ComicWord $c="#7030a0">Comic</ComicWord></GalleryItem>
                <GalleryItem><span><NumLead>1.</NumLead><NumWord>NumList Ti</NumWord></span></GalleryItem>
                <GalleryItem $w={105}><span><NumLead>1.1</NumLead><NumWord>NumList T</NumWord></span></GalleryItem>
              </GalleryItems>
              <GalleryScroll>
                <GScrollBtn><Chev c="#777" /></GScrollBtn>
                <GScrollBtn><Chev /></GScrollBtn>
                <GScrollBtn><Chev /></GScrollBtn>
              </GalleryScroll>
            </Gallery>
          </GroupBody>
          <GroupLabel $pr={18}>Formatvorlagen</GroupLabel>
          <Launch />
        </Group>

        <Group $w={113}>
          <GroupBody $col $pad="0 0 0 12px">
            <EditRow $mt={-1}><EditIcon><Search size={16} strokeWidth={1.2} style={{ transform: "scaleX(-1)" }} /></EditIcon>Suchen<EditChev $ml={14}><Chev /></EditChev></EditRow>
            <EditRow><EditIcon><span style={{ color: "#2e8ad8", fontSize: 11 }}>↪</span><span style={{ color: "#c678dd" }}>b</span></EditIcon>Ersetzen</EditRow>
            <EditRow><EditIcon><MousePointer2 size={15} strokeWidth={1} /></EditIcon>Markieren<EditChev><Chev /></EditChev></EditRow>
          </GroupBody>
          <GroupLabel>Bearbeiten</GroupLabel>
        </Group>

        <Group $w={202}>
          <GroupBody>
            <Large $w={120}>
              <LargeIcon><FileUp size={32} strokeWidth={1.3} color="#1473e6" /></LargeIcon>
              <LargeText>Adobe PDF<br />erstellen und teilen</LargeText>
            </Large>
            <Large $w={70}>
              <LargeIcon>
                <svg width="34" height="32" viewBox="0 0 34 32" fill="none" stroke="#1473e6" strokeWidth="1.4"><circle cx="13" cy="8" r="6" /><path d="M10 14c0 3-7 4-8 10h13" /><path d="M14 31h20" strokeWidth="1.8" /><path d="M17 25l3 3m0-3l-3 3M23 28l2-3 1 3 2-3 1 3 2-3" strokeWidth="1" /></svg>
              </LargeIcon>
              <LargeText>Unterschriften<br />anfragen</LargeText>
            </Large>
          </GroupBody>
          <GroupLabel>Adobe Acrobat</GroupLabel>
        </Group>

        <Group $w={68}>
          <GroupBody>
            <Large $w={68}>
              <LargeIcon><svg width="24" height="36" viewBox="0 0 24 36" fill="none"><rect x="6" y="1" width="12" height="24" rx="6" fill="#0a64c8" stroke="#7fb0e6" strokeWidth=".6" /><path d="M2 16c0 6 4 10 10 10s10-4 10-10M12 26v8" stroke="#cfcfcf" strokeWidth="1.3" /></svg></LargeIcon>
              <LargeText>Diktieren</LargeText>
            </Large>
          </GroupBody>
          <GroupLabel>Sprache</GroupLabel>
        </Group>

        <Group $w={59}>
          <GroupBody>
            <Large $w={59}>
              <LargeIcon><svg width="32" height="36" viewBox="0 0 32 36" fill="none"><path d="M3 34l3-10L19 2l5 3-13 23z" stroke="#2e8ad8" strokeWidth="1.5" /><path d="M18 13h13v4H16zM15 20h13v4H12zM12 27h10v4H9z" fill="#2e7dd4" /></svg></LargeIcon>
              <LargeText>Editor</LargeText>
            </Large>
          </GroupBody>
          <GroupLabel>Editor</GroupLabel>
        </Group>

        <Group $w={128}>
          <GroupBody>
            <Large $w={128}>
              <LargeIcon><svg width="32" height="34" viewBox="0 0 32 34" fill="none"><path d="M1 1h27M1 1v25M4 4h24v24H4z" stroke="#cfcfcf" strokeWidth="1" /><path d="M7 7h18v18H7z" stroke="#cfcfcf" strokeWidth="1" /><circle cx="19" cy="21" r="6" stroke="#2e8ad8" strokeWidth="1.4" fill="#4b4b4b" /><path d="M23 26l6 6" stroke="#2e8ad8" strokeWidth="1.4" /></svg></LargeIcon>
              <LargeText>Wiederverwendung<br />von Dateien</LargeText>
            </Large>
          </GroupBody>
          <GroupLabel>Wiederverwendung v...</GroupLabel>
        </Group>
        <RibbonEnd><Chev w={10} c="#d8d8d8" /></RibbonEnd>
      </Ribbon>

      <Workspace>
        <VRulerDraw />
        <DocArea>
          <HRulerDraw />
          <Page>
            <DocRed>Formatvorlagen·sind·an·ihrer·roten·Farbe·erkennbar.·Schriftart·ist</DocRed>
            <DocFrag $ml={218} $mt={1} $c="#f00">te</DocFrag>
            <DocFrag $ml={218} $mt={16} $c="#f00">u</DocFrag>
            <DocFrag $ml={218} $mt={112}>e</DocFrag>
            <DocFrag $ml={218} $mt={1}>·c</DocFrag>
            <DocFrag $ml={218} $mt={177}>·i</DocFrag>
            <DocFrag $ml={218} $mt={3}>te</DocFrag>
            <DocFrag $ml={218} $mt={7}>·i</DocFrag>

            <ListLine $mt={26}><NumMark>1.   <NumArrow>→</NumArrow></NumMark><Caps>Nummerierung·Ebene·1¶</Caps></ListLine>
            <ListLine $mt={11} $ml={30}><NumMark>1.1 <NumArrow>→</NumArrow></NumMark><Caps>Nummerierung·Ebene·2<Soft>↵</Soft></Caps></ListLine>
            <ListLine $mt={1} $ml={60}><Caps>Hängender·Einzug.¶</Caps></ListLine>
            <ListLine $mt={10} $ml={60}><NumMark>1.1.1<NumArrow>→</NumArrow></NumMark><Caps>Nummerierung·Ebene·3<Soft>↵</Soft></Caps></ListLine>
            <ListLine $ml={90}><Caps>Hängender·Einzug¶</Caps></ListLine>

            <ListLine $h={18} $mt={12}>
              <HandSlot $c="#7030a0"><Hand size={14} color="#7030a0" />→</HandSlot><Comic $c="#00b050">Bullet·auf·Ebene·1<Soft>↵</Soft></Comic>
            </ListLine>
            <ListLine $h={18} $mt={4} $ml={30}><Comic $c="#00b050">Hängender·Einzug¶</Comic></ListLine>
            <ListLine $h={18} $mt={10} $ml={30}>
              <HandSlot $c="#ed7d31"><Hand size={14} color="#ed7d31" />→</HandSlot><Comic $c="#002060">Bullet·auf·Ebene·2¶</Comic>
            </ListLine>
            <ListLine $h={18} $mt={10} $ml={60}>
              <HandSlot $c="#e02020"><Hand size={14} color="#e02020" />→</HandSlot><Comic $c="#7030a0">Bullet·auf·Ebene·3<Soft>↵</Soft></Comic>
            </ListLine>
            <ListLine $h={18} $mt={3} $ml={90}><Comic $c="#7030a0">Hängender·Einzug¶</Comic></ListLine>

            <DocFrag $mt={8}>Wird·einem·Absatz·eine·<Wavy>Nummerierungs</Wavy>-Formatvorlage·zugewiesen,·rückt·er·direkt·ein:¶</DocFrag>
            <ListLine $mt={10} $ml={30}><NumMark>1.2 <NumArrow>→</NumArrow></NumMark><Caps>Das·hier·wird·also·Ebene·2·bei·Zuweisung·von·„<Wavy>NumListe</Wavy>·Times·2“¶</Caps></ListLine>
            <DocFrag $mt={11}>Beachten·Sie·hier·die·fortlaufende·Nummerierung!·¶</DocFrag>
            <DocFrag $mt={9}>¶</DocFrag>
          </Page>
        </DocArea>

        <Pane>
          <PaneHead>
            <PaneTitle>Formatvorlagen</PaneTitle>
            <PaneTri />
            <PaneClose><X size={14} strokeWidth={2.6} /></PaneClose>
          </PaneHead>
          <StyleList>
            {STYLES.map(s => (
              <StyleRow key={s.name} $pl={s.pl} $sel={s.sel}>
                {s.dot && <Dot />}
                {s.hand && <HandGap $w={s.gap}><Hand size={15} color={s.hand} style={{ marginTop: -6 }} /></HandGap>}
                {s.box ? (
                  <BlockBox><StyleName $f={s.f} $s={s.s} $c={s.c} $i={s.i}>{s.name}</StyleName></BlockBox>
                ) : (
                  <StyleName $f={s.f} $s={s.s} $c={s.c} $i={s.i} $b={s.b} $u={s.u} $bg={s.bg} $ls={s.ls}>{s.name}</StyleName>
                )}
                {s.m === "p" && <Marker $r={5}>¶</Marker>}
                {s.m === "a" && <Marker $r={4}>a</Marker>}
                {s.m === "u" && <Marker $r={4} $u>¶a</Marker>}
              </StyleRow>
            ))}
          </StyleList>
          <PaneCheck><PaneBox $on><Check size={11} strokeWidth={2.4} /></PaneBox>Vorschau anzeigen</PaneCheck>
          <PaneCheck><PaneBox />Verknüpfte Formatvorlagen deaktivieren</PaneCheck>
          <PaneBtns>
            <PaneBtn>
              <svg width="20" height="20" viewBox="0 0 20 20"><text x="1" y="14" fontSize="14" fill="#333" fontFamily="Noto Sans">A</text><path d="M13 16h6M16 13v6" stroke="#1e8a3c" strokeWidth="1.2" /></svg>
            </PaneBtn>
            <PaneBtn>
              <svg width="20" height="20" viewBox="0 0 20 20" fill="none"><text x="1" y="13" fontSize="13" fill="#333" fontFamily="Noto Sans">A</text><circle cx="12.500" cy="12" r="3" stroke="#2e7dd4" strokeWidth="1.2" /><path d="M15 14.500l3 3" stroke="#2e7dd4" strokeWidth="1.4" /></svg>
            </PaneBtn>
            <PaneBtn>
              <svg width="20" height="20" viewBox="0 0 20 20" fill="none"><text x="1" y="14" fontSize="14" fill="#333" fontFamily="Noto Sans">A</text><path d="M11 14l3 3 5-6" stroke="#1e8a3c" strokeWidth="1.2" /></svg>
            </PaneBtn>
            <PaneBtn $w={77}>Optionen...</PaneBtn>
          </PaneBtns>
        </Pane>
      </Workspace>

      <Status>
        <StatusItem>Seite 1 von 1</StatusItem>
        <StatusItem $ml={21}>209 Wörter</StatusItem>
        <StatusItem $ml={17}><BookOpen size={14} strokeWidth={1} /></StatusItem>
        <StatusItem $ml={17}>Deutsch (Deutschland)</StatusItem>
        <StatusItem $ml={17}>Textvorhersagen: ein</StatusItem>
        <StatusItem $ml={18} $gap={2}>
          <svg width="15" height="15" viewBox="0 0 15 15" fill="none" stroke="#d8d8d8"><circle cx="7.500" cy="2.500" r="1.600" /><path d="M1 5h13M5 6l1 4-2 4M10 6l-1 4 2 4" /></svg>
          Barrierefreiheit: Untersuchen
        </StatusItem>
        <StatusRight>
          <StatusItem><Focus size={14} strokeWidth={1} />Fokus</StatusItem>
          <ViewBtn $ml={11}><BookOpen size={15} strokeWidth={1} /></ViewBtn>
          <ViewBtn $on><Lines w={12} n={4} c="#e6e6e6" align="just" /></ViewBtn>
          <ViewBtn><svg width="15" height="15" viewBox="0 0 15 15" fill="none" stroke="#d8d8d8"><path d="M2 1h9v6M2 1v12h6M4 4h5M4 7h3M4 10h2" /><circle cx="11" cy="11" r="3.500" /></svg></ViewBtn>
          <ZoomMinus><Minus size={12} color="#ddd" /></ZoomMinus>
          <Slider><Thumb /></Slider>
          <Plus size={13} color="#ddd" />
          <StatusItem $ml={11} $w={38}>100 %</StatusItem>
        </StatusRight>
      </Status>

      {/* ---- Formatvorlage ändern ---- */}
      <Dialog $x={83} $y={162} $w={620} $h={537}>
        <Title>Formatvorlage ändern</Title>
        <Body>
          <SectionHead $mt={6}>Eigenschaften</SectionHead>
          <FormRow $h={20} $mt={5}><Label $w={198}><u>N</u>ame:</Label><TextField $w={401}>ComicSans Bullets</TextField></FormRow>
          <FormRow $h={21} $mt={3}><Label $w={198} $dis>Formatvorlagentyp:</Label><Select w={401} h={21} dis>Liste</Select></FormRow>
          <SectionHead $mt={3}>Formatierung</SectionHead>
          <FormRow $h={20} $mt={5}><Label $w={198} $dis>Beginnen mit:</Label><Spin w={65} v="1" dis /></FormRow>
          <FormRow $h={22} $mt={4}><Label $w={198} $b>Formatierung <u>ü</u>bernehmen für:</Label><Select w={401}>1. Ebene</Select></FormRow>
          <FormRow $h={22} $mt={8}>
            <Select w={137} h={20}>Wingdings 2</Select>
            <SelectBox $w={58} $h={20} $ml={4}><SelectText>14</SelectText><SelectArrow><SymbolChev /></SelectArrow></SelectBox>
            <DlgSep $m={3} />
            <RoundBtn>F</RoundBtn>
            <RoundBtn $i>K</RoundBtn>
            <RoundBtn $u>U</RoundBtn>
            <DlgSep $m={3} />
            <SelectBox $w={133} $h={20} $ml={1}><Swatch $c="#7030a0" /><SelectArrow><SymbolChev /></SelectArrow></SelectBox>
          </FormRow>
          <DlgHr $mt={8} $ml={9} />
          <FormRow $h={22} $mt={4}>
            <IconToggle $w={24} $ml={0}><NumberListIcon /></IconToggle>
            <IconToggle $w={23} $on $ml={8}><BulletIcon c="#444" b="#3d6ea5" /></IconToggle>
            <DlgSep $m={9} />
            <Select w={311}>Aufzählungszeichen, ausgefüllter Kreis: <Hand size={10} color="#555" style={{ marginTop: -5 }} /></Select>
            <IconToggle $w={26} $ml={7}><Omega size={16} strokeWidth={2.4} color="#1e6fb5" /></IconToggle>
            <IconToggle $w={26} $ml={6}>
              <svg width="17" height="19" viewBox="0 0 17 19" fill="none"><path d="M1 1h10v11H1z" stroke="#777" /><circle cx="7" cy="9" r="2.500" fill="#d9b98a" /><rect x="6" y="10" width="10" height="6" fill="#cbe3f5" stroke="#1e6fb5" /><path d="M11 16v2M8 18h6" stroke="#1e6fb5" /></svg>
            </IconToggle>
            <DlgSep $m={3} />
            <IconToggle $w={16} $ml={9}><IndentIcon out c="#555" b="#1e6fb5" /></IconToggle>
            <IconToggle $w={16} $ml={16}><IndentIcon c="#555" b="#1e6fb5" /></IconToggle>
          </FormRow>
          <Preview $h={152} $mt={3} $w={599} $pad="7px 0 0 0">
            <PreviewHand $pl={14}><Hand size={10} color="#7030a0" /></PreviewHand>
            <PreviewBar $c="#000" $ml={51} />
            <PreviewBar $c="#000" $ml={51} $mt={21} />
            <PreviewHand $pl={52} $mt={10}><Hand size={10} color="#ed7d31" /></PreviewHand>
            <PreviewBar $ml={78} />
            <PreviewHand $pl={79} $mt={10}><Hand size={10} color="#e02020" /></PreviewHand>
            <PreviewBar $ml={105} />
            <PreviewBar $ml={186} $mt={21} />
          </Preview>
          <Desc>
            <DescLine>Schriftart: Wingdings 2, 14 Pt., Schriftfarbe: Lila, Einzug:</DescLine>
            <DescLine $pl={12}>Links:  0 cm</DescLine>
            <DescLine $pl={12}>Hängend:  0,8 cm, Mit Gliederung + Ebene: 1 + Nummerierungsformatvorlage: Aufzählungszeichen +</DescLine>
            <DescLine>Ausgerichtet an:  0 cm + Tabstopp nach:  0,8 cm + Einzug bei:  0,8 cm, Priorität: 100</DescLine>
          </Desc>
          <RadioRow>
            <Radio $on /><RadioText>N<u>u</u>r in diesem Dokument</RadioText>
            <Radio $ml={12} /><RadioText>Neue auf dieser Vorlage basierende Dokumente</RadioText>
          </RadioRow>
          <FooterRow $mt={11} $pl={1} $pr={1}>
            <Btn $w={73}><span><u>F</u>ormat</span><Tri $down /></Btn>
            <BtnPair>
              <Btn $w={74} $def>OK</Btn>
              <Btn $w={74}>Abbrechen</Btn>
            </BtnPair>
          </FooterRow>
        </Body>
      </Dialog>

      {/* ---- Liste mit mehreren Ebenen ändern ---- */}
      <Dialog $x={716} $y={251} $w={845} $h={475}>
        <Title h={31}>Liste mit mehreren Ebenen ändern</Title>
        <Body>
          <Split $h={182} $mt={6}>
            <LeftCol>
              <Label>Klicken Sie auf die Ebene, um sie zu <u>ä</u>ndern:</Label>
              <PreRow>
                <LevelList>
                  <LevelItems>{GROUPS_LEVELS.map(n => <LevelItem key={n} $on={n === 1}>{n}</LevelItem>)}</LevelItems>
                  <LevelScroll><ChevronDown size={11} style={{ transform: "rotate(180deg)" }} /><ChevronDown size={11} /></LevelScroll>
                </LevelList>
                <Preview $h={166} $w={581} $ml={0} $pad="7px 0 0 0">
                  <PRow $pl={16}><PHand $w={35}><Hand size={10} color="#7030a0" /></PHand><PLabel>ComicSans Bullet</PLabel><PBar $c="#000" /></PRow>
                  <PRow $pl={51}><PBar $c="#000" /></PRow>
                  <PRow $pl={52}><PHand $w={26}><Hand size={10} color="#ed7d31" /></PHand><PLabel>ComicSans Bullet 2</PLabel><PBar /></PRow>
                  <PRow $pl={79}><PHand $w={26}><Hand size={10} color="#e02020" /></PHand><PLabel>ComicSans Bullet 3</PLabel><PBar /></PRow>
                  <PRow $pl={186}><PBar /></PRow>
                  <PRow $pl={222}><PBar /></PRow>
                  <PRow $pl={249}><PBar /></PRow>
                  <PRow $pl={276}><PBar /></PRow>
                  <PRow $pl={303}><PBar /></PRow>
                  <PRow $pl={330}><PBar /></PRow>
                </Preview>
              </PreRow>
            </LeftCol>
            <RightCol>
              <Label $dis $mt={1}>Änderungen übernehmen für:</Label>
              <Select w={184} dis mt={2}>Komplette Liste</Select>
              <Label $mt={11}><u>V</u>erbinden mit Formatvorlage:</Label>
              <Select w={184} h={20} mt={2}>ComicSans Bullet</Select>
              <Label $dis $mt={11}>In Katalog anzuzeigende Ebene:</Label>
              <Select w={184} dis mt={2}>Ebene 1</Select>
              <Label $mt={11}>L<u>i</u>stenNr-Feldliste:</Label>
              <TextField $w={184} $mt={2} />
            </RightCol>
          </Split>
          <SectionHead $mt={2}>Zahlenformat</SectionHead>
          <Split $h={88}>
            <LeftCol>
              <Label $mt={5}>F<u>o</u>rmatierung für Zahl eingeben:</Label>
              <FormRow $h={22} $mt={1} $pl={0} $gap={9}>
                <TextField $w={547}><Hand size={14} color="#7030a0" /></TextField>
                <Btn $w={73}><span><u>S</u>chriftart...</span></Btn>
              </FormRow>
              <LabelPair>
                <Label $w={320}>Za<u>h</u>lenformatvorlage für diese Ebene:</Label>
                <Label $dis>Ebenennummer einschließen aus:</Label>
              </LabelPair>
              <TwoSel>
                <Select w={311}>Aufzählungszeichen, ausgefüllter Kreis: <Hand size={10} color="#555" style={{ marginTop: -5 }} /></Select>
                <Select w={311} dis />
              </TwoSel>
            </LeftCol>
            <RightCol>
              <FormRow $h={20} $mt={5} $pl={0}>
                <Label $w={80} $dis $top>Beginnen mit:</Label><Spin w={58} v="0" dis />
              </FormRow>
              <Check_ dis mt={4}>Liste neu beginnen nach:</Check_>
              <Select w={164} dis mt={4} ml={20} />
              <Check_ dis mt={4}>Nummerieren nach Norm</Check_>
            </RightCol>
          </Split>
          <SectionHead $mt={7}>Aufzählungszeichenposition</SectionHead>
          <Split $h={85}>
            <LeftCol>
              <FormRow $h={22} $mt={5} $pl={0}>
                <Label $w={109} $top><u>Z</u>ahlenausrichtung:</Label>
                <Select w={91} dis>Links</Select>
                <Label $w={75} $ml={10} $top><u>A</u>usrichtung:</Label>
                <Spin w={89} v="0 cm" ml={0} />
              </FormRow>
              <FormRow $h={22} $mt={3} $pl={0}>
                <Label $w={109} $top>Texteinzug <u>b</u>ei:</Label>
                <Spin w={89} v="0,8 cm" />
                <Btn $w={157} $def $ml={12}><span><u>F</u>ür alle Ebenen festlegen...</span></Btn>
              </FormRow>
            </LeftCol>
            <RightCol>
              <Label $mt={5}>Text <u>d</u>anach:</Label>
              <Select w={184} mt={2}>Tabstoppzeichen</Select>
              <Check_ on mt={4}><u>T</u>abstopp hinzufügen bei:</Check_>
              <Spin w={89} v="0,8 cm" mt={4} ml={18} />
            </RightCol>
          </Split>
          <FooterRow $mt={11} $pr={1}>
            <Btn $w={94}><span>&lt;&lt; <u>R</u>eduzieren</span></Btn>
            <BtnPair>
              <Btn $w={74}>OK</Btn>
              <Btn $w={74}>Abbrechen</Btn>
            </BtnPair>
          </FooterRow>
        </Body>
      </Dialog>

      {/* ---- Für alle Ebenen festlegen ---- */}
      <Dialog $x={1079} $y={737} $w={354} $h={152} $strong>
        <Title on pl={7}>Für alle Ebenen festlegen</Title>
        <Body>
          <FormRow $h={20} $mt={7} $pl={0} $between $top>
            <Label><u>A</u>ufzählungszeichen-/Zahlenposition für erste Ebene:</Label><Spin w={59} v="0 cm" />
          </FormRow>
          <FormRow $h={20} $mt={3} $pl={0} $between $top>
            <Label><u>T</u>extposition für erste Ebene:</Label><Spin w={59} v="0,8 cm" />
          </FormRow>
          <FormRow $h={20} $mt={19} $pl={0} $between $top>
            <Label><u>Z</u>usätzlicher Einzug für jede Ebene:</Label><Spin w={59} v="0,8 cm" />
          </FormRow>
          <FooterRow $mt={3} $pr={1} $end>
            <BtnPair>
              <Btn $w={74} $focus>OK</Btn>
              <Btn $w={74}>Abbrechen</Btn>
            </BtnPair>
          </FooterRow>
        </Body>
      </Dialog>

      <CursorSvg viewBox="0 0 13 20"><path d="M1 1v15l4-3.500 2.500 6 2.500-1-2.500-6H12z" fill="#fff" stroke="#000" strokeWidth="1" /></CursorSvg>
    </App_>
  );
}
